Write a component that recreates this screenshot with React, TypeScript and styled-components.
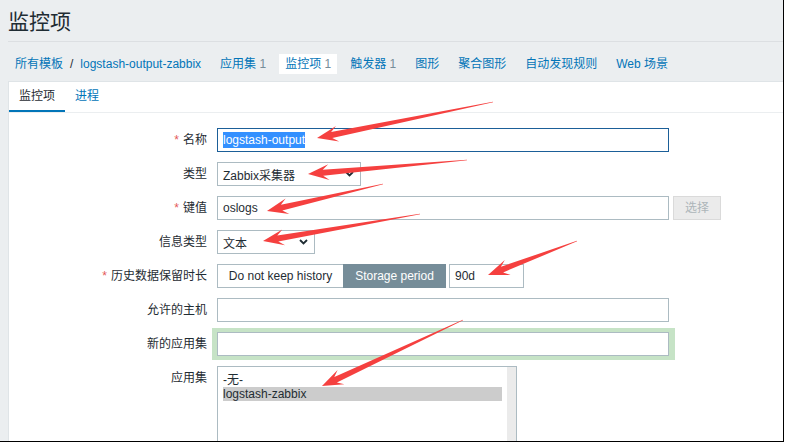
import React from 'react';
import styled, { createGlobalStyle } from 'styled-components';

const GlobalStyle = createGlobalStyle`
  html, body {
    margin: 0;
    padding: 0;
    background: #fff;
  }
  body {
    font-family: "Liberation Sans", Arial, "Noto Sans CJK SC", sans-serif;
    font-size: 12px;
    color: #1f2c33;
  }
`;

const Page = styled.div`
  position: relative;
  display: flex;
  flex-direction: column;
  width: 783px;
  height: 441px;
  overflow: hidden;
  background: #ebeef0;
  border-right: 1px solid #000;
  border-bottom: 1px solid #000;
`;

const Header = styled.header`
  flex-shrink: 0;
  box-sizing: border-box;
  height: 42px;
  margin-left: 8px;
  padding-top: 10px;
  border-bottom: 1px solid #dcdfe2;
`;

const Title = styled.h1`
  margin: 0;
  font-size: 21px;
  line-height: 24px;
  font-weight: normal;
  color: #1f2c33;
`;

const Nav = styled.nav`
  flex-shrink: 0;
  display: flex;
  align-items: center;
  padding: 12px 0 7px 9px;
`;

const NavItem = styled.span<{ $active?: boolean }>`
  height: 20px;
  line-height: 20px;
  padding: 0 6px;
  margin-right: 7px;
  white-space: nowrap;
  color: #0275b8;
  background: ${({ $active }) => ($active ? '#fff' : 'transparent')};
`;

const Sep = styled.span`
  margin: 0 7px;
  color: #1f2c33;
`;

const Count = styled.span`
  color: #768d99;
`;

const Panel = styled.main`
  flex: 1 0 auto;
  margin-left: 8px;
  background: #fff;
  border-top: 1px solid #dfe4e7;
  border-left: 1px solid #dfe4e7;
`;

const TabBar = styled.div`
  display: flex;
  border-bottom: 1px solid #ebeef0;
`;

const Tab = styled.span<{ $active?: boolean }>`
  padding: 0 10px;
  line-height: 28px;
  border-bottom: 2px solid ${({ $active }) => ($active ? '#0275b8' : 'transparent')};
  color: ${({ $active }) => ($active ? '#1f2c33' : '#0275b8')};
`;

const Form = styled.div`
  display: grid;
  grid-template-columns: 198px 1fr;
  column-gap: 10px;
  row-gap: 10px;
  padding-top: 15px;
`;

const Label = styled.div`
  text-align: right;
  line-height: 24px;
  white-space: nowrap;
`;

const Star = styled.span`
  color: #e45959;
  margin-right: 4px;
`;

const Field = styled.div`
  display: flex;
  align-items: center;
`;

const TextBox = styled.div<{ $w: number; $focus?: boolean }>`
  box-sizing: border-box;
  width: ${({ $w }) => $w}px;
  height: 24px;
  line-height: 22px;
  padding: 0 5px;
  border: 1px solid ${({ $focus }) => ($focus ? '#1b5f98' : '#acbbc2')};
  background: #fff;
  white-space: nowrap;
`;

const Selected = styled.span`
  background: #3390ff;
  color: #fff;
  padding: 1px 0;
`;

const Typo = styled.span`
  text-decoration: underline wavy #e33;
  text-decoration-thickness: 1px;
  text-underline-offset: -1px;
`;

const SelectBox = styled.div<{ $w: number }>`
  box-sizing: border-box;
  display: flex;
  align-items: center;
  justify-content: space-between;
  width: ${({ $w }) => $w}px;
  height: 24px;
  padding: 0 6px 0 5px;
  border: 1px solid #acbbc2;
  background: #fff;
  white-space: nowrap;
`;

const Button = styled.div`
  box-sizing: border-box;
  width: 48px;
  height: 24px;
  margin-left: 4px;
  line-height: 22px;
  text-align: center;
  background: #ebebeb;
  border: 1px solid #dadada;
  color: #adb5b9;
`;

const Segmented = styled.div`
  display: flex;
  height: 24px;
  box-sizing: border-box;
  border: 1px solid #acbbc2;
`;

const Segment = styled.span<{ $on?: boolean; $w: number }>`
  width: ${({ $w }) => $w}px;
  line-height: 22px;
  text-align: center;
  white-space: nowrap;
  background: ${({ $on }) => ($on ? '#768d99' : '#fff')};
  color: ${({ $on }) => ($on ? '#fff' : '#1f2c33')};
  margin: ${({ $on }) => ($on ? '-1px -1px -1px 0' : '0')};
  padding-top: ${({ $on }) => ($on ? '1px' : '0')};
  height: ${({ $on }) => ($on ? '23px' : 'auto')};
`;

const Highlight = styled.div`
  margin: -4px -6px -4px -5px;
  padding: 4px 6px 4px 5px;
  background: #c6e3c6;
`;

const ListBox = styled.div`
  display: flex;
  box-sizing: border-box;
  width: 300px;
  height: 120px;
  border: 1px solid #acbbc2;
  background: #fff;
`;

const Options = styled.div`
  flex: 1;
  padding: 6px 5px;
`;

const Option = styled.div<{ $sel?: boolean }>`
  line-height: 14px;
  background: ${({ $sel }) => ($sel ? '#cccccc' : 'transparent')};
`;

const ScrollTrack = styled.div`
  width: 9px;
  background: #ebebeb;
`;

const Overlay = styled.svg`
  position: absolute;
  top: 0;
  left: 0;
  pointer-events: none;
`;

const Chevron = () => (
  <svg width="9" height="6" viewBox="0 0 9 6">
    <polyline points="1,1 4.5,4.5 8,1" fill="none" stroke="#1f2c33" strokeWidth="1.8" />
  </svg>
);

// tail -> tip, tapered shaft with a barbed head
function arrow(tx: number, ty: number, hx: number, hy: number) {
  const dx = hx - tx;
  const dy = hy - ty;
  const len = Math.sqrt(dx * dx + dy * dy);
  const ux = dx / len;
  const uy = dy / len;
  const nx = -uy;
  const ny = ux;
  const neckX = hx - ux * 15;
  const neckY = hy - uy * 15;
  const wingX = hx - ux * 21;
  const wingY = hy - uy * 21;
  const p = [
    [tx + nx * 0.3, ty + ny * 0.3],
    [neckX + nx * 3, neckY + ny * 3],
    [wingX + nx * 8, wingY + ny * 8],
    [hx, hy],
    [wingX - nx * 8, wingY - ny * 8],
    [neckX - nx * 3, neckY - ny * 3],
    [tx - nx * 0.3, ty - ny * 0.3],
  ];
  return p.map(([x, y]) => `${x.toFixed(1)},${y.toFixed(1)}`).join(' ');
}

const arrows: [number, number, number, number][] = [
  [493, 102, 317, 138],
  [467, 160, 308, 174],
  [383, 184, 267, 211],
  [420, 214, 263, 241],
  [577, 241, 488, 275],
  [463, 320, 322, 386],
];

const App: React.FC = () => {
  return (
    <>
      <GlobalStyle />
      <Page>
        <Header>
          <Title>监控项</Title>
        </Header>

        <Nav>
          <NavItem>
            所有模板<Sep>/</Sep>logstash-output-zabbix
          </NavItem>
          <NavItem>应用集 <Count>1</Count></NavItem>
          <NavItem $active>监控项 <Count>1</Count></NavItem>
          <NavItem>触发器 <Count>1</Count></NavItem>
          <NavItem>图形</NavItem>
          <NavItem>聚合图形</NavItem>
          <NavItem>自动发现规则</NavItem>
          <NavItem>Web 场景</NavItem>
        </Nav>

        <Panel>
          <TabBar>
            <Tab $active>监控项</Tab>
            <Tab>进程</Tab>
          </TabBar>

          <Form>
            <Label><Star>*</Star>名称</Label>
            <Field>
              <TextBox $w={452} $focus>
                <Selected><Typo>logstash</Typo>-output</Selected>
              </TextBox>
            </Field>

            <Label>类型</Label>
            <Field>
              <SelectBox $w={144}>
                Zabbix采集器
                <Chevron />
              </SelectBox>
            </Field>

            <Label><Star>*</Star>键值</Label>
            <Field>
              <TextBox $w={452}>oslogs</TextBox>
              <Button>选择</Button>
            </Field>

            <Label>信息类型</Label>
            <Field>
              <SelectBox $w={98}>
                文本
                <Chevron />
              </SelectBox>
            </Field>

            <Label><Star>*</Star>历史数据保留时长</Label>
            <Field>
              <Segmented>
                <Segment $w={125}>Do not keep history</Segment>
                <Segment $w={103} $on>Storage period</Segment>
              </Segmented>
              <TextBox $w={75} style={{ marginLeft: 3 }}>90d</TextBox>
            </Field>

            <Label>允许的主机</Label>
            <Field>
              <TextBox $w={452} />
            </Field>

            <Label>新的应用集</Label>
            <Field>
              <Highlight>
                <TextBox $w={452} />
              </Highlight>
            </Field>

            <Label>应用集</Label>
            <Field>
              <ListBox>
                <Options>
                  <Option>-无-</Option>
                  <Option $sel>logstash-zabbix</Option>
                </Options>
                <ScrollTrack />
              </ListBox>
            </Field>
          </Form>
        </Panel>

        <Overlay width="785" height="443" viewBox="0 0 785 443">
          {arrows.map((a, i) => (
            <polygon key={i} points={arrow(a[0], a[1], a[2], a[3])} fill="#f5403f" />
          ))}
        </Overlay>
      </Page>
    </>
  );
};

export default App;
